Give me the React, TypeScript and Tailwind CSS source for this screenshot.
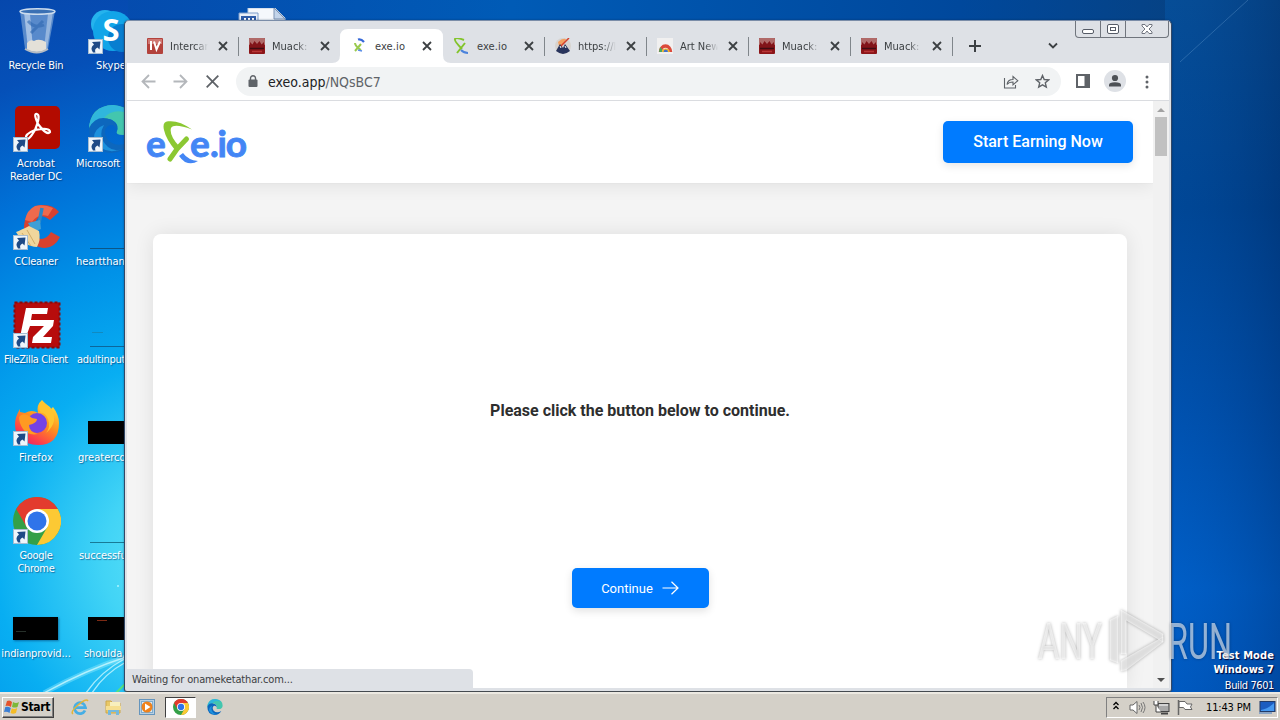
import type { ReactNode } from "react";

const TAHOMA =
	"font-['DejaVu_Sans_Condensed','DejaVu_Sans',sans-serif] font-stretch-condensed";

export default function App() {
	return (
		<div
			className={`relative flex h-[720px] w-[1280px] flex-col overflow-hidden text-[11px] leading-[13px] ${TAHOMA}`}
		>
			<div className="relative flex-1">
				<Wallpaper />
				<DesktopIcons />
				<BrowserWindow />
				<div className="absolute top-[649px] right-[6px] text-right text-white [text-shadow:1px_1px_1px_#003]">
					<div className="leading-[14px] font-bold tracking-[0.1px]">
						Test Mode
					</div>
					<div className="leading-[14px] font-bold">Windows 7</div>
					<div className="leading-[17px] tracking-[-0.4px]">Build 7601</div>
				</div>
				<Watermark />
			</div>
			<Taskbar />
		</div>
	);
}

function Wallpaper() {
	return (
		<svg
			className="absolute inset-0 h-full w-full"
			viewBox="0 0 1280 692"
			preserveAspectRatio="none"
		>
			<defs>
				<linearGradient id="top" x1="0" x2="1">
					<stop offset="0" stopColor="#0647ac" />
					<stop offset="0.4" stopColor="#005bb6" />
					<stop offset="0.75" stopColor="#00489c" />
					<stop offset="0.92" stopColor="#064284" />
					<stop offset="1" stopColor="#0a4f94" />
				</linearGradient>
				<linearGradient id="right" x1="0" y1="0" x2="0" y2="1">
					<stop offset="0" stopColor="#07478a" />
					<stop offset="0.3" stopColor="#00408a" />
					<stop offset="0.6" stopColor="#004da8" />
					<stop offset="0.85" stopColor="#005cc4" />
					<stop offset="1" stopColor="#0056bc" />
				</linearGradient>
				<linearGradient id="edge" x1="0" x2="1">
					<stop offset="0" stopColor="#0070e0" stopOpacity="0.15" />
					<stop offset="1" stopColor="#002a66" stopOpacity="0.3" />
				</linearGradient>
				<radialGradient
					id="glow"
					gradientUnits="userSpaceOnUse"
					cx="200"
					cy="560"
					r="600"
				>
					<stop offset="0" stopColor="#6ae8f8" />
					<stop offset="0.16" stopColor="#42d4f6" />
					<stop offset="0.34" stopColor="#08aef2" />
					<stop offset="0.5" stopColor="#0092e8" />
					<stop offset="0.66" stopColor="#0072d8" />
					<stop offset="0.85" stopColor="#0550b8" />
					<stop offset="1" stopColor="#0647ac" />
				</radialGradient>
			</defs>
			<rect width="1280" height="692" fill="url(#top)" />
			<rect width="128" height="692" fill="url(#glow)" />
			<rect x="1165" width="115" height="692" fill="url(#right)" />
			<rect x="1165" width="115" height="692" fill="url(#edge)" />
			<path d="M1180 62L1248 0" stroke="#7fb0dd" strokeOpacity="0.3" />
			<path
				d="M44 693Q86 670 126 657"
				fill="none"
				stroke="#9af0ff"
				strokeOpacity="0.4"
				strokeWidth="5"
			/>
			<path
				d="M44 693Q86 670 126 657M86 693Q100 672 126 658M92 693Q104 674 126 662"
				fill="none"
				stroke="#d4fbff"
				strokeOpacity="0.75"
				strokeWidth="1.4"
			/>
			<path d="M116 693L125 684" stroke="#55e37c" strokeWidth="2" />
			<circle cx="118" cy="586" r="1" fill="#aef4ff" />
		</svg>
	);
}

interface DesktopIconProps {
	label: string;
	place: string;
	labelClass?: string;
	shortcut?: boolean;
	children: ReactNode;
}

function DesktopIcon({
	label,
	place,
	labelClass = "text-center",
	shortcut = true,
	children,
}: DesktopIconProps) {
	return (
		<div className={`absolute w-[76px] ${place}`}>
			<div className="relative mx-auto h-12 w-12">
				{children}
				{shortcut && <ShortcutArrow />}
			</div>
			<div
				className={`mt-1 whitespace-pre text-white [text-shadow:1px_1px_1px_rgba(0,30,80,0.5)] ${labelClass}`}
			>
				{label}
			</div>
		</div>
	);
}

function DesktopIcons() {
	return (
		<>
			<DesktopIcon
				label="Recycle Bin"
				place="top-[7px] left-[-1px]"
				labelClass="-ml-[2px] text-center tracking-[-0.2px]"
				shortcut={false}
			>
				<RecycleBinIcon />
			</DesktopIcon>
			<DesktopIcon
				label={"Acrobat\nReader DC"}
				place="top-[105px] left-[-1px]"
				labelClass="-ml-[2px] text-center tracking-[-0.05px]"
			>
				<AcrobatIcon />
			</DesktopIcon>
			<DesktopIcon
				label="CCleaner"
				place="top-[203px] left-[-1px]"
				labelClass="-ml-[2px] text-center tracking-[-0.2px]"
			>
				<CCleanerIcon />
			</DesktopIcon>
			<DesktopIcon
				label="FileZilla Client"
				place="top-[301px] left-[-1px]"
				labelClass="-ml-[2px] text-center tracking-[-0.35px]"
			>
				<FileZillaIcon />
			</DesktopIcon>
			<DesktopIcon
				label="Firefox"
				place="top-[399px] left-[-1px]"
				labelClass="-ml-[2px] text-center tracking-[0.2px]"
			>
				<FirefoxIcon />
			</DesktopIcon>
			<DesktopIcon
				label={"Google\nChrome"}
				place="top-[497px] left-[-1px]"
				labelClass="-ml-[2px] text-center tracking-[-0.3px]"
			>
				<ChromeIcon className="h-12 w-12" />
			</DesktopIcon>
			<DesktopIcon
				label="indianprovid..."
				place="top-[595px] left-[-1px]"
				labelClass="-ml-[2px] text-center tracking-[-0.1px]"
				shortcut={false}
			>
				<div className="pt-[22px]">
					<div className="h-[23px] w-[45px] bg-black pt-[14px] pl-[3px] shadow-[1px_1px_2px_#0368]">
						<div className="h-px w-[10px] bg-[#26302a]" />
					</div>
				</div>
			</DesktopIcon>
			<DesktopIcon
				label="Skype"
				place="top-[7px] left-[74px]"
				labelClass="pl-[22px]"
			>
				<SkypeIcon />
			</DesktopIcon>
			<DesktopIcon
				label="Microsoft"
				place="top-[105px] left-[74px]"
				labelClass="pl-[2px] tracking-[-0.1px]"
			>
				<EdgeIcon className="h-12 w-12" />
			</DesktopIcon>
			<DesktopIcon
				label="heartthan"
				place="top-[203px] left-[74px]"
				labelClass="pl-[2px]"
				shortcut={false}
			>
				<div className="pt-[45px] pl-[2px]">
					<div className="h-px bg-[#0c5687]" />
				</div>
			</DesktopIcon>
			<DesktopIcon
				label="adultinput"
				place="top-[301px] left-[74px]"
				labelClass="pl-[3px] tracking-[-0.25px]"
				shortcut={false}
			>
				<div className="pt-[31px] pl-[2px]">
					<div className="ml-[2px] h-px w-[11px] bg-[#118ac0]" />
					<div className="mt-[13px] h-px bg-[#0c669b]" />
				</div>
			</DesktopIcon>
			<DesktopIcon
				label="greaterco"
				place="top-[399px] left-[74px]"
				labelClass="pl-[4px]"
				shortcut={false}
			>
				<div className="pt-[22px]">
					<div className="h-[23px] w-[45px] bg-black" />
				</div>
			</DesktopIcon>
			<DesktopIcon
				label="successfu"
				place="top-[497px] left-[74px]"
				labelClass="pl-[5px] tracking-[-0.1px]"
				shortcut={false}
			>
				<div className="pt-[45px] pl-[2px]">
					<div className="h-px bg-[#187a96]" />
				</div>
			</DesktopIcon>
			<DesktopIcon
				label="shoulda,"
				place="top-[595px] left-[74px]"
				labelClass="pl-[10px] tracking-[-0.1px]"
				shortcut={false}
			>
				<div className="pt-[22px]">
					<div className="h-[23px] w-[45px] bg-black pt-[3px] pl-[9px]">
						<div className="h-px w-[10px] bg-[#7c2a14]" />
					</div>
				</div>
			</DesktopIcon>
			<svg
				className="absolute top-[8px] left-[238px] h-[20px] w-[50px]"
				viewBox="0 0 50 20"
			>
				<path d="M10 0H37L47 10V20H10Z" fill="#f5f8fc" stroke="#b9c9dd" />
				<path d="M36 0V11H47Z" fill="#c3d4ea" stroke="#7c93b3" />
				<path d="M1 5H20V20H1Z" fill="#e9eff8" stroke="#7f9ecb" />
				<path d="M3 8H18V20H3Z" fill="#2f5ca8" />
				<path d="M7 10v4M11 10v4M15 10v4" stroke="#fff" strokeWidth="2" />
			</svg>
		</>
	);
}

const TABS = [
	{ title: "Intercar", icon: "iv" },
	{ title: "Muack: I", icon: "crown" },
	{ title: "exe.io", icon: "loading", active: true },
	{ title: "exe.io", icon: "exe" },
	{ title: "https://l", icon: "badge" },
	{ title: "Art New", icon: "rainbow" },
	{ title: "Muack: I", icon: "crown" },
	{ title: "Muack: I", icon: "crown" },
];

function BrowserWindow() {
	return (
		<div className="absolute top-[20px] left-[124px] flex h-[672px] w-[1048px] flex-col rounded-t-[5px] rounded-b-[3px] border border-[#334866] bg-[#dee1e6] px-[2px] pb-[3px] shadow-[0_0_2px_#0248] [border-bottom-color:#454a50] [border-top-color:#7b8da8]">
			<div className="flex h-[42px] shrink-0 pl-[10px]">
				{TABS.map((tab, i) => (
					<BrowserTab
						key={i}
						title={tab.title}
						icon={tab.icon}
						active={tab.active}
						divider={i !== 1 && i !== 2}
					/>
				))}
				<div className="flex w-[44px] items-center justify-center pt-[8px]">
					<svg className="h-[12px] w-[12px]" viewBox="0 0 12 12">
						<path d="M6 0v12M0 6h12" stroke="#3c4043" strokeWidth="2" />
					</svg>
				</div>
				<div className="flex flex-1 justify-end pt-[21px] pr-[17px]">
					<svg className="h-[8px] w-[10px]" viewBox="0 0 10 8">
						<path
							d="M1 1.5L5 5.5L9 1.5"
							fill="none"
							stroke="#3c4043"
							strokeWidth="1.8"
						/>
					</svg>
				</div>
				<WindowButtons />
			</div>
			<Toolbar />
			<div className="flex min-h-0 flex-1 bg-[#f4f4f4]">
				<Page />
				<div className="flex w-[16px] shrink-0 flex-col items-center bg-[#f1f1f1] pt-[7px] pb-[6px]">
					<svg className="h-[4px] w-[8px]" viewBox="0 0 8 4">
						<path d="M0 4L4 0L8 4Z" fill="#a2a2a2" />
					</svg>
					<div className="mt-[5px] h-[39px] w-[12px] bg-[#c1c1c1]" />
					<div className="flex-1" />
					<svg className="h-[4px] w-[8px]" viewBox="0 0 8 4">
						<path d="M0 0L4 4L8 0Z" fill="#505050" />
					</svg>
				</div>
			</div>
			<div className="absolute bottom-[3px] left-[2px] h-[19px] w-[346px] rounded-tr-[4px] bg-[#dee1e6] pt-[4px] pl-[5px] tracking-[-0.15px] text-[#3c4043]">
				Waiting for onameketathar.com...
			</div>
		</div>
	);
}

interface BrowserTabProps {
	title: string;
	icon: string;
	active?: boolean;
	divider: boolean;
}

function BrowserTab({ title, icon, active, divider }: BrowserTabProps) {
	return (
		<div className="relative flex w-[102px] shrink-0 pt-[8px]">
			{active && (
				<svg
					className="absolute top-[8px] left-[-9px] h-[34px] w-[120px]"
					viewBox="0 0 120 34"
				>
					<path
						d="M0 34Q8 34 8 26V8Q8 0 16 0H103Q111 0 111 8V26Q111 34 119 34Z"
						fill="#fff"
					/>
				</svg>
			)}
			<div className="relative flex flex-1 items-center pl-[10px]">
				<Favicon name={icon} />
				<div
					className={`ml-[7px] w-[38px] overflow-hidden whitespace-nowrap text-[#3c4043] ${
						title.length > 6
							? "[mask-image:linear-gradient(90deg,#000_65%,transparent)]"
							: "pl-px tracking-[0.1px]"
					}`}
				>
					{title}
				</div>
				<svg className="ml-[10px] h-[10px] w-[10px]" viewBox="0 0 10 10">
					<path
						d="M1 1L9 9M9 1L1 9"
						stroke="#3c4043"
						strokeWidth="1.8"
					/>
				</svg>
			</div>
			{divider && <div className="mt-[8px] h-[19px] w-px bg-[#80868b]" />}
			{!divider && <div className="w-px" />}
		</div>
	);
}

function WindowButtons() {
	return (
		<div className="flex h-[17px] w-[94px] shrink-0 rounded-b-[4px] border border-t-0 border-[#70757d]">
			<div className="flex w-[25px] items-end justify-center border-[#70757d] border-r pb-[3px]">
				<div className="h-[5px] w-[12px] rounded-[2px] border border-[#555b66] bg-white" />
			</div>
			<div className="flex w-[25px] items-center justify-center border-[#70757d] border-r">
				<div className="flex h-[10px] w-[12px] items-center justify-center rounded-[2px] border border-[#555b66] bg-white">
					<div className="h-[4px] w-[6px] border border-[#555b66]" />
				</div>
			</div>
			<div className="flex flex-1 items-center justify-center">
				<svg className="h-[10px] w-[12px]" viewBox="0 0 12 10">
					<path
						d="M1 .5h3L6 3L8 .5h3v1.500L8 5L11 8v1.500H8L6 7L4 9.500H1V8L4 5L1 2Z"
						fill="#fff"
						stroke="#70757f"
					/>
				</svg>
			</div>
		</div>
	);
}

function Toolbar() {
	return (
		<div className="flex h-[38px] shrink-0 items-center border-[#dadce0] border-b bg-white px-[6px]">
			<ToolButton>
				<svg className="-ml-px h-[15px] w-[15px]" viewBox="0 0 15 15">
					<path
						d="M14.500 7.500H1.500M8 1L1.500 7.500L8 14"
						fill="none"
						stroke="#b4b7bb"
						strokeWidth="1.8"
					/>
				</svg>
			</ToolButton>
			<ToolButton>
				<svg className="-ml-px h-[15px] w-[15px]" viewBox="0 0 15 15">
					<path
						d="M.5 7.500H13.500M7 1L13.500 7.500L7 14"
						fill="none"
						stroke="#b4b7bb"
						strokeWidth="1.8"
					/>
				</svg>
			</ToolButton>
			<ToolButton>
				<svg className="-ml-px h-[13px] w-[13px]" viewBox="0 0 13 13">
					<path
						d="M.7 .7L12.300 12.300M12.300 .7L.7 12.300"
						stroke="#5f6368"
						strokeWidth="1.8"
					/>
				</svg>
			</ToolButton>
			<div className="mx-[7px] mr-[6px] flex h-[29px] flex-1 items-center rounded-full bg-[#f1f3f4] pr-[2px] pl-[12px]">
				<svg className="-mt-[2px] h-[12px] w-[10px]" viewBox="0 0 10 12">
					<rect x="0.500" y="4.500" width="9" height="7.500" rx="1" fill="#5f6368" />
					<path
						d="M2.500 5V3a2.500 2.200 0 0 1 5 0V5"
						fill="none"
						stroke="#5f6368"
						strokeWidth="1.4"
					/>
				</svg>
				<div className="ml-[10px] flex-1 text-[14px] leading-[18px] text-[#202124]">
					exeo.app<span className="text-[#5f6368]">/NQsBC7</span>
				</div>
				<ToolButton>
					<svg className="h-[14px] w-[16px]" viewBox="0 0 16 14">
						<path
							d="M1.500 3V13H12.500V10M4 9.500C4.500 6 6.500 4.500 10 4.500V1.500L14.800 5.700L10 9.800V7C7.500 7 5.500 7.500 4 9.500Z"
							fill="none"
							stroke="#5f6368"
							strokeWidth="1.1"
						/>
					</svg>
				</ToolButton>
				<ToolButton>
					<svg className="-ml-px h-[15px] w-[15px]" viewBox="0 0 15 15">
						<path
							d="M7.500 1.500L9.200 5.500L13.700 5.900L10.300 8.800L11.300 13.100L7.500 10.800L3.700 13.100L4.700 8.800L1.300 5.900L5.800 5.500Z"
							fill="none"
							stroke="#5f6368"
							strokeWidth="1.4"
						/>
					</svg>
				</ToolButton>
			</div>
			<ToolButton>
				<svg className="-mt-px h-[14px] w-[14px]" viewBox="0 0 14 14">
					<path d="M0 0H14V14H0ZM2 2V12H8.500V2Z" fillRule="evenodd" fill="#5f6368" />
				</svg>
			</ToolButton>
			<ToolButton>
				<svg className="-mt-px h-[22px] w-[22px]" viewBox="0 0 22 22">
					<circle cx="11" cy="11" r="11" fill="#dee1e6" />
					<circle cx="11" cy="8" r="3.100" fill="#4d5156" />
					<path d="M5 16.500V15Q5 12.300 11 12.300T17 15V16.500Z" fill="#4d5156" />
				</svg>
			</ToolButton>
			<ToolButton>
				<svg className="h-[14px] w-[4px]" viewBox="0 0 4 14">
					<circle cx="2" cy="2" r="1.500" fill="#5f6368" />
					<circle cx="2" cy="7" r="1.500" fill="#5f6368" />
					<circle cx="2" cy="12" r="1.500" fill="#5f6368" />
				</svg>
			</ToolButton>
		</div>
	);
}

function ToolButton({ children }: { children: ReactNode }) {
	return (
		<div className="flex w-[32px] shrink-0 items-center justify-center">
			{children}
		</div>
	);
}

function Page() {
	return (
		<div className="flex min-w-0 flex-1 flex-col overflow-hidden font-[Roboto,sans-serif] font-stretch-normal">
			<header className="flex h-[82px] shrink-0 items-start justify-between bg-white pt-[20px] pr-[20px] pl-[19px] shadow-[0_0_1px_rgba(0,0,0,0.1),0_4px_16px_rgba(0,0,0,0.07)]">
				<ExeLogo />
				<button
					type="button"
					className="h-[42px] w-[190px] rounded-[5px] bg-[#007bff] pb-px text-[16px] font-medium text-white shadow-[0_3px_8px_rgba(0,0,0,0.1)]"
				>
					Start Earning Now
				</button>
			</header>
			<main className="mx-[26px] mt-[51px] flex flex-1 flex-col items-center rounded-t-[8px] bg-white shadow-[0_0_20px_rgba(0,0,0,0.09)]">
				<h2 className="mt-[167px] text-[16px] leading-[20px] font-bold text-[#2e2e2e]">
					Please click the button below to continue.
				</h2>
				<button
					type="button"
					className="mt-[147px] flex h-[40px] w-[137px] items-center justify-center gap-[9px] rounded-[5px] bg-[#007bff] text-[13px] text-white shadow-[0_3px_8px_rgba(0,0,0,0.12)]"
				>
					Continue
					<svg className="h-[14px] w-[17px]" viewBox="0 0 17 14">
						<path
							d="M.5 7H16M9.500 .7L16 7L9.500 13.300"
							fill="none"
							stroke="#fff"
							strokeWidth="1.2"
						/>
					</svg>
				</button>
			</main>
		</div>
	);
}

function ExeLogo() {
	return (
		<svg className="h-[44px] w-[102px]" viewBox="0 0 102 44">
			<g
				fill="#4386f5"
				stroke="#4386f5"
				strokeWidth="0.9"
				fontFamily="Lato, sans-serif"
				fontSize="37"
				fontWeight="bold"
			>
				<text x="0" y="36">
					e
				</text>
				<text x="44" y="36">
					e
				</text>
				<text x="64" y="36" textLength="37">
					.io
				</text>
			</g>
			<path d="M37 32Q42 39 52 40Q46 44 39 41Q35 38 33 35Z" fill="#4386f5" />
			<path
				d="M46 8.500Q33 -1 22 .3Q16 1 18 9Q20 18 29 29L33 25Q23 14 25 7Q28 2 46 8.500Z"
				fill="#8bc832"
			/>
			<path
				d="M40.500 18L31 28L24 38"
				fill="none"
				stroke="#8bc832"
				strokeLinecap="round"
				strokeWidth="5"
			/>
		</svg>
	);
}

function Favicon({ name }: { name: string }) {
	const cls = "h-[16px] w-[16px] shrink-0";
	switch (name) {
		case "iv":
			return (
				<svg className={cls} viewBox="0 0 16 16">
					<rect width="16" height="16" rx="1" fill="#b3423c" />
					<rect x="1" y="1" width="14" height="5" fill="#cf7772" />
					<path
						d="M4 3v9M7 3.500L9.500 11.500L13 3.500"
						fill="none"
						stroke="#fff"
						strokeWidth="2"
					/>
				</svg>
			);
		case "crown":
			return (
				<svg className={cls} viewBox="0 0 16 16">
					<rect width="16" height="16" rx="1" fill="#8c1518" />
					<rect width="16" height="7" rx="1" fill="#b06a69" />
					<path
						d="M1 10V4L3.500 6.500L5.500 3L8 6L10.500 3L12.500 6.500L15 4V10Z"
						fill="#821419"
					/>
					<path d="M1 10.500H15" stroke="#3f0c12" strokeWidth="1.500" />
					<path d="M3 13.500H13" stroke="#b83636" strokeWidth="1.500" />
				</svg>
			);
		case "loading":
			return (
				<svg className={cls} viewBox="0 0 16 16">
					<path
						d="M7 1.500Q10 .5 13 4"
						fill="none"
						stroke="#3568d8"
						strokeWidth="2.200"
					/>
					<path
						d="M4 5Q4 8 10 12M10 6L4 13"
						fill="none"
						stroke="#9aca4e"
						strokeWidth="2"
					/>
					<path d="M7 12L11 13" stroke="#5a8ee8" strokeWidth="1.500" />
				</svg>
			);
		case "exe":
			return (
				<svg className={cls} viewBox="0 0 16 16">
					<path
						d="M11 2Q3 -1 2 1Q1 3 9 11M12 5L4 15"
						fill="none"
						stroke="#83c42c"
						strokeWidth="2"
					/>
					<path
						d="M8 12Q11 15 15 15"
						fill="none"
						stroke="#4b83dc"
						strokeWidth="2"
					/>
				</svg>
			);
		case "badge":
			return (
				<svg className={cls} viewBox="0 0 16 16">
					<circle cx="8" cy="8" r="8" fill="#d7d3cf" />
					<path d="M3 4Q7 0 11 1L9 6L4 8Z" fill="#f4a060" />
					<path d="M1 13L5 6L8 10L10 6L15 13Q11 16 8 16T1 13Z" fill="#28345c" />
					<path d="M14 0L6 8" stroke="#d33f2b" strokeWidth="1.500" />
					<path d="M5 8L6 10M10 8L11 10" stroke="#fff" />
				</svg>
			);
		default:
			return (
				<svg className={cls} viewBox="0 0 16 16">
					<rect width="16" height="16" fill="#f1f0f0" />
					<path
						d="M3.500 14A5 6 0 0 1 13.500 14"
						fill="none"
						stroke="#dc4a3a"
						strokeWidth="3.500"
					/>
					<path
						d="M5.500 14A3.500 4 0 0 1 12 14"
						fill="none"
						stroke="#f2b62c"
						strokeWidth="2"
					/>
					<path d="M6.500 14A2.200 2.500 0 0 1 11 14Z" fill="#4272cb" />
					<path d="M2 14L3 9L5 11V14Z" fill="#4aa75d" />
				</svg>
			);
	}
}

function Watermark() {
	return (
		<svg
			className="absolute top-[604px] left-[1034px] h-[74px] w-[204px] font-stretch-normal"
			viewBox="0 0 204 74"
		>
			<g
				className="[filter:drop-shadow(0_0_1.5px_rgba(0,0,0,0.5))]"
				fill="#fff"
				fillOpacity="0.58"
				fontFamily="Roboto, sans-serif"
				fontSize="50"
			>
				<text x="4" y="55" textLength="64" lengthAdjust="spacingAndGlyphs">
					ANY
				</text>
				<text x="134" y="55" textLength="64" lengthAdjust="spacingAndGlyphs">
					RUN
				</text>
				<path
					d="M76 16L84 12V59L76 56ZM87 6L129 30V38L92 16V50H87ZM87 57L129 33V38L92 66L87 67Z"
					stroke="#fff"
					strokeOpacity="0.3"
				/>
			</g>
		</svg>
	);
}

function Taskbar() {
	return (
		<div className="relative flex h-[28px] items-center border-[#ece9e2] border-t-2 bg-[#d4d0c8] text-black">
			<div className="ml-[2px] flex h-[21px] w-[52px] items-center gap-px border border-t-white border-r-[#404040] border-b-[#404040] border-l-white pl-px text-[12px] font-bold tracking-[-0.3px] shadow-[inset_-1px_-1px_0_#808080]">
				<svg className="h-[16px] w-[16px]" viewBox="0 0 16 16">
					<path d="M3 2Q6 .5 8 3L7 8Q4 6 1.500 7Z" fill="#e5532b" />
					<path d="M9 3Q12 5 15 3L13.500 8Q11 9 8 8Z" fill="#7db83a" />
					<path d="M1.300 8Q4 7 6.800 9L5.500 14Q3 12 0 13Z" fill="#3b7fd4" />
					<path d="M7.800 9.300Q10 11 13.200 9L12 14Q9 15.500 6.500 14Z" fill="#f4bc26" />
				</svg>
				Start
			</div>
			<div className="ml-[17px] flex items-center">
				<svg className="h-[17px] w-[18px]" viewBox="0 0 18 17">
					<path
						d="M14 11.500A5.500 5.500 0 1 1 14.500 8.700H5"
						fill="none"
						stroke="#46aee5"
						strokeWidth="2.800"
					/>
					<path
						d="M2 15Q-1 13 7 6T17 2"
						fill="none"
						stroke="#e3b538"
						strokeWidth="1.500"
					/>
				</svg>
				<svg className="ml-[16px] h-[16px] w-[17px]" viewBox="0 0 17 16">
					<path d="M1 2H6L8 4H15V14H1Z" fill="#e8c867" stroke="#cda84a" />
					<path d="M5 3H15V7H5Z" fill="#f8efbd" />
					<path d="M1 7H16V11H1Z" fill="#f6df91" />
					<path d="M3 16V11H14V16H11V13H6V16Z" fill="#75b9dd" />
				</svg>
				<svg className="ml-[17px] h-[17px] w-[17px]" viewBox="0 0 17 17">
					<rect x=".5" y=".5" width="15" height="15" fill="#b9d0e2" stroke="#6595bd" />
					<rect x="2.500" y="2.500" width="11" height="11" fill="#dceaf4" stroke="#7faccd" />
					<circle cx="8" cy="8" r="5.500" fill="#ef821b" />
					<path d="M6 4.500V11.500L11.500 8Z" fill="#fff" />
				</svg>
			</div>
			<div className="ml-[9px] flex h-[21px] w-[31px] items-center justify-center border border-t-[#404040] border-r-white border-b-white border-l-[#404040] bg-white">
				<ChromeIcon className="h-[16px] w-[16px]" />
			</div>
			<EdgeIcon className="ml-[11px] h-[16px] w-[16px]" />
			<div className="mr-[2px] ml-auto flex h-[21px] w-[172px] items-center border border-t-[#808080] border-r-white border-b-white border-l-[#808080] pl-[6px]">
				<svg className="-mt-[3px] h-[9px] w-[6px]" viewBox="0 0 6 9">
					<path
						d="M.5 4L3 1.500L5.500 4M.5 8L3 5.500L5.500 8"
						fill="none"
						stroke="#000"
						strokeWidth="1.300"
					/>
				</svg>
				<svg className="ml-[10px] h-[15px] w-[17px]" viewBox="0 0 17 15">
					<path
						d="M1 5H4L8 1.500V13.500L4 10H1Z"
						fill="#fff"
						stroke="#666"
					/>
					<path
						d="M10 5Q12 7.500 10 10M12 3Q15 7.500 12 12M14 2Q18 7.500 14 13"
						fill="none"
						stroke="#777"
					/>
				</svg>
				<svg className="ml-[7px] h-[15px] w-[17px]" viewBox="0 0 17 15">
					<rect x="5" y="3.500" width="11" height="8" fill="#a8a8a8" stroke="#444" />
					<path d="M6 5H15" stroke="#fff" />
					<path d="M8 13.500H15" stroke="#444" strokeWidth="2" />
					<path
						d="M1 1V5H5V1M3 5V12H8"
						fill="#fff"
						stroke="#444"
					/>
				</svg>
				<svg className="ml-[7px] h-[15px] w-[17px]" viewBox="0 0 17 15">
					<path
						d="M2 1.500H8L10 4H15L13.500 7L15 9.500H8L6.500 7.500H2Z"
						fill="#fff"
						stroke="#666"
					/>
					<path d="M1.500 0V15" stroke="#666" strokeWidth="1.500" />
				</svg>
				<div className="ml-[12px] tracking-[-0.15px] whitespace-nowrap">11:43 PM</div>
				<svg className="mr-px ml-auto h-[13px] w-[17px]" viewBox="0 0 17 13">
					<rect x="1" y=".5" width="15" height="10" fill="#1b5cc0" stroke="#233b66" />
					<path d="M2 9Q9 8 15 2V10H2Z" fill="#4698ef" />
					<path d="M0 12H13" stroke="#8aa4c4" strokeWidth="2" />
				</svg>
			</div>
		</div>
	);
}

function ShortcutArrow() {
	return (
		<svg
			className="absolute bottom-0 left-0 h-[16px] w-[16px]"
			viewBox="0 0 16 16"
		>
			<rect x=".5" y=".5" width="14" height="14" fill="#eef5fb" stroke="#a6bdd2" />
			<path
				d="M5 13.500Q1.500 9 6 5.500L4 3L12.500 2.500L11.500 10.500L9.500 8.500Q6 10 7.500 13.500Z"
				fill="#1e4a86"
			/>
		</svg>
	);
}

function RecycleBinIcon() {
	return (
		<svg className="h-12 w-12" viewBox="0 0 48 48">
			<path d="M7 4L12 42Q24 48 35 42L42 4Z" fill="#8fb4dc" fillOpacity="0.6" />
			<path d="M11 5L15 42H20L17 7Z" fill="#d5e5f5" fillOpacity="0.6" />
			<path d="M35 7L31 41L34 42L40 5Z" fill="#cfe0f2" fillOpacity="0.5" />
			<path
				d="M14 36Q17 32 21 34Q26 31 33 35L33 43Q24 47 14 43Z"
				fill="#e3e0d8"
			/>
			<path
				d="M15 14Q22 22 31 18M18 26L30 14"
				fill="none"
				stroke="#2f68b0"
				strokeWidth="3"
				strokeOpacity="0.6"
			/>
			<ellipse
				cx="24.500"
				cy="4.500"
				rx="17.500"
				ry="2.800"
				fill="#3a70b4"
				stroke="#ccdced"
				strokeWidth="1.500"
			/>
			<path d="M12 42Q24 49 35 42" fill="none" stroke="#b5bcc4" strokeWidth="2" />
		</svg>
	);
}

function AcrobatIcon() {
	return (
		<svg className="h-12 w-12" viewBox="0 0 48 48">
			<rect x="2" y="1" width="45" height="43" rx="5" fill="#b30b00" />
			<path
				d="M13 33Q12 29 22 25Q37 22 37 27Q34 31 25 19Q20 8 24 9Q28 10 22 25Q15 37 13 33Z"
				fill="none"
				stroke="#fff"
				strokeWidth="2.200"
			/>
		</svg>
	);
}

function CCleanerIcon() {
	return (
		<svg className="h-12 w-12" viewBox="0 0 48 48">
			<path
				d="M46 9L37 17Q26 8 22 20Q18 34 28 36Q34 36 38 29L47 34Q40 48 26 44Q11 40 11 23Q13 4 28 2Q40 1 46 9Z"
				fill="#d8412f"
			/>
			<path d="M22 3Q31 1 40 5L35 13Q25 10 19 19L12 17Q14 7 22 3Z" fill="#ee6a4d" />
			<path d="M29 5L26 20" stroke="#2a86c6" strokeWidth="3.500" />
			<path d="M15 20L27 17L28 26L20 29Z" fill="#3f9fd6" />
			<path d="M3 29Q8 27 16 23L26 28Q28 37 24 44Q12 44 3 29Z" fill="#f0d69c" />
			<path d="M9 30L18 43M14 27L22 41" stroke="#d0ab67" strokeWidth="1" />
		</svg>
	);
}

function FileZillaIcon() {
	return (
		<svg className="h-12 w-12" viewBox="0 0 48 48">
			<rect
				x="1.500"
				y="1.500"
				width="45"
				height="45"
				fill="#b70c0c"
				stroke="#8c0808"
				strokeWidth="2"
				strokeDasharray="3 2"
			/>
			<path
				d="M13 7H35L34 13H19L18 19H29L28 25H17L13 36H7Z"
				fill="#fff"
			/>
			<path d="M25 19H41L40 25L30 36H39L38 42H19L20 36L31 25H24Z" fill="#fff" />
		</svg>
	);
}

function FirefoxIcon() {
	return (
		<svg className="h-12 w-12" viewBox="0 0 48 48">
			<defs>
				<linearGradient id="fx" x1="0.8" y1="0" x2="0.2" y2="1">
					<stop offset="0" stopColor="#ffe53c" />
					<stop offset="0.45" stopColor="#ff8f1e" />
					<stop offset="0.8" stopColor="#fc3d4c" />
					<stop offset="1" stopColor="#e0226c" />
				</linearGradient>
			</defs>
			<path
				d="M29 1Q34 7 38 10L40 8Q46 16 46 24Q46 46 25 46Q2 45 2 25Q2 18 7 10V13L12 14Q19 10 25 14Q23 6 29 1Z"
				fill="url(#fx)"
			/>
			<circle cx="24" cy="24" r="10" fill="#7542e5" />
			<path
				d="M6 18Q10 12 19 19L24 20Q24 24 16 26Q16 33 25 35Q15 37 10 30Q6 24 6 18Z"
				fill="#ff9a22"
			/>
			<path d="M24 14Q32 12 35 20Q38 28 33 34Q47 22 37 8L29 2Q24 8 28 14Z" fill="#ffc52f" />
		</svg>
	);
}

function SkypeIcon() {
	return (
		<svg className="h-12 w-12" viewBox="0 0 48 48">
			<circle cx="17" cy="17" r="14" fill="#25b3ed" />
			<circle cx="25" cy="24" r="20" fill="#12a5e8" />
			<circle cx="34" cy="31" r="14" fill="#087ed0" />
			<text
				x="14.500"
				y="34"
				fill="#fff"
				className="font-stretch-normal"
				fontFamily="Open Sans, sans-serif"
				fontWeight="bold"
				fontSize="31"
			>
				S
			</text>
		</svg>
	);
}

function EdgeIcon({ className }: { className: string }) {
	return (
		<svg className={className} viewBox="0 0 48 48">
			<path
				d="M1 24Q2 1 25 0Q47 2 47 20Q46 30 35 30Q27 30 29 26Q31 21 27 17Q17 8 1 24Z"
				fill="#43c6ae"
			/>
			<path d="M1 22Q4 1 25 0Q37 1 43 9Q25 2 16 13Q7 14 1 22Z" fill="#30b6dc" />
			<path
				d="M1 23Q8 10 21 14Q30 17 29 25Q26 18 20 21Q14 26 20 35Q29 44 43 36Q36 48 23 48Q1 46 1 23Z"
				fill="#0d67bd"
			/>
			<path d="M16 20Q9 32 20 42Q26 47 35 44Q15 51 6 35Q5 24 16 20Z" fill="#1d91dd" />
		</svg>
	);
}

function ChromeIcon({ className }: { className: string }) {
	return (
		<svg className={className} viewBox="0 0 48 48">
			<circle cx="24" cy="24" r="24" fill="#34a047" />
			<path d="M24 12H44.800A24 24 0 0 0 3.200 12L13.600 30L24 24Z" fill="#e33b2e" />
			<path d="M24 12H44.800A24 24 0 0 1 24 48L34.400 30L24 24Z" fill="#fcc934" />
			<circle cx="24" cy="24" r="12" fill="#fff" />
			<circle cx="24" cy="24" r="9.500" fill="#2f74ea" />
		</svg>
	);
}
